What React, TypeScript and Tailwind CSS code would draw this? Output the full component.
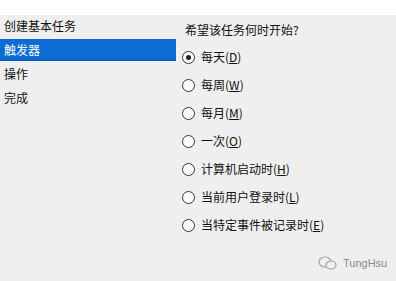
import React from "react";

const font = { fontFamily: '"Noto Sans CJK SC", "Noto Sans", sans-serif' };

const options: { label: string; key: string }[] = [
  { label: "每天", key: "D" },
  { label: "每周", key: "W" },
  { label: "每月", key: "M" },
  { label: "一次", key: "O" },
  { label: "计算机启动时", key: "H" },
  { label: "当前用户登录时", key: "L" },
  { label: "当特定事件被记录时", key: "E" },
];

function Radio({ checked }: { checked?: boolean }) {
  return (
    <div className="w-[13px] h-[13px] rounded-full border border-[#333333] bg-white flex items-center justify-center shrink-0">
      {checked && <div className="w-[5px] h-[5px] rounded-full bg-[#222222]" />}
    </div>
  );
}

export default function App() {
  return (
    <div className="relative w-[396px] h-[281px] bg-[#efefef] overflow-hidden text-[12px] text-[#111111]" style={font}>
      <div className="h-[15px] bg-white" />
      <div className="flex">
        <div className="w-[176px] flex flex-col gap-[2px]">
          <div className="h-[22px] flex items-center pl-[4px]">创建基本任务</div>
          <div className="h-[22px] flex items-center pl-[4px] bg-[#0b6dd4] text-white border-b border-[#0a58ad]">触发器</div>
          <div className="h-[22px] flex items-center pl-[4px]">操作</div>
          <div className="h-[22px] flex items-center pl-[4px]">完成</div>
        </div>
        <div className="flex-1 flex flex-col">
          <div className="h-[26px] flex items-center pl-[9px] pt-[3px]">希望该任务何时开始?</div>
          <div className="flex flex-col pt-[2px]">
            {options.map((o, i) => (
              <div key={o.key} className="h-[28px] flex items-center pl-[6px] gap-[6px]">
                <Radio checked={i === 0} />
                <span>
                  {o.label}(<span className="underline">{o.key}</span>)
                </span>
              </div>
            ))}
          </div>
        </div>
      </div>
      <div className="absolute left-[318px] top-[255px] flex items-center gap-[5px] text-[#8a8a8a]">
        <svg width="20" height="14" viewBox="0 0 20 14">
          <ellipse cx="7" cy="6" rx="6" ry="5" fill="none" stroke="#a0a0a0" strokeWidth="1.2" />
          <ellipse cx="13" cy="9" rx="5" ry="4" fill="#efefef" stroke="#a0a0a0" strokeWidth="1.2" />
        </svg>
        <span className="text-[11px]" style={{ fontFamily: '"Liberation Sans", sans-serif' }}>TungHsu</span>
      </div>
    </div>
  );
}
